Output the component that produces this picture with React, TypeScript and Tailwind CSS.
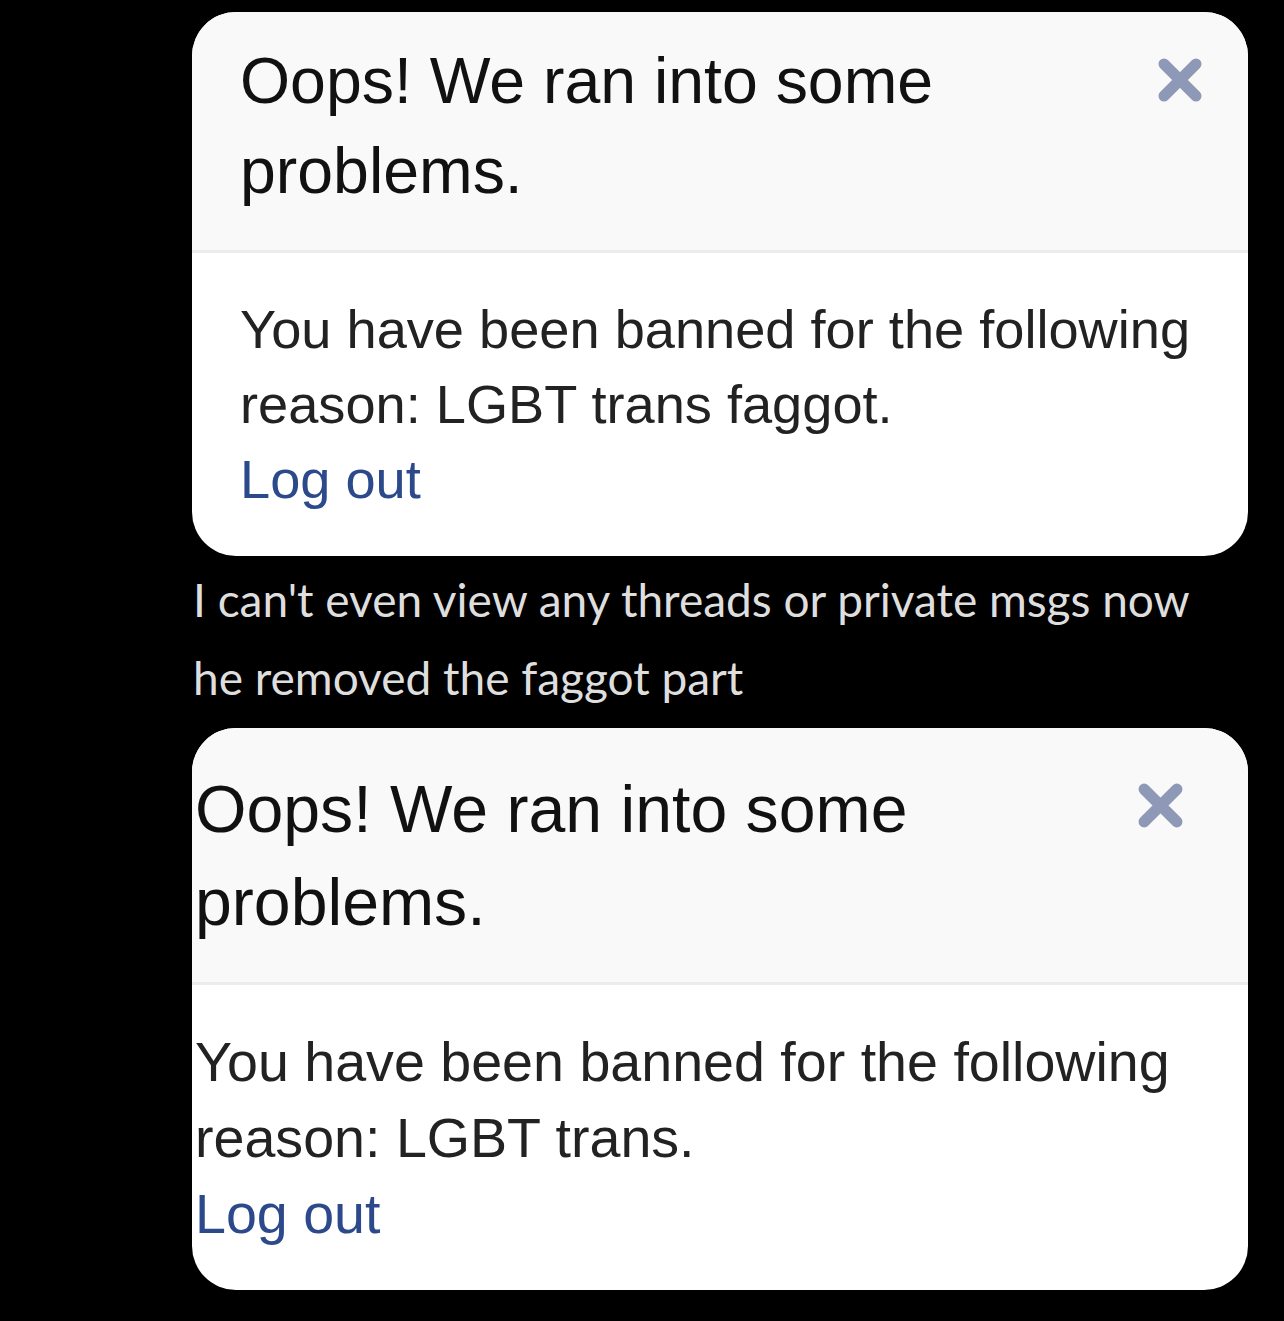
import React from "react";

function CloseIcon({ className }: { className?: string }) {
  return (
    <svg viewBox="0 0 46 46" className={className} fill="none">
      <path
        d="M7 7 L39 39 M39 7 L7 39"
        stroke="#8d99b6"
        strokeWidth="11"
        strokeLinecap="round"
      />
    </svg>
  );
}

export default function App() {
  return (
    <div className="min-h-[1321px] w-[1284px] bg-black pt-[12px] pl-[192px] font-['Liberation_Sans',Arial,sans-serif]">
      {/* first screenshot */}
      <div className="w-[1056px] overflow-hidden rounded-[44px] bg-white">
        <div className="relative border-b-[3px] border-[#ececec] bg-[#f9f9f9] pt-[24px] pr-[150px] pb-[34px] pl-[48px]">
          <h2 className="text-[64.4px] leading-[90px] text-[#111]">
            Oops! We ran into some problems.
          </h2>
          <CloseIcon className="absolute top-[45px] right-[45px] h-[46px] w-[46px]" />
        </div>
        <div className="pt-[39px] pr-[40px] pb-[39px] pl-[48px] text-[54.2px] leading-[75px] text-[#222]">
          <p>You have been banned for the following reason: LGBT trans faggot.</p>
          <a className="text-[#2c4a8b]">Log out</a>
        </div>
      </div>

      {/* message */}
      <div className="mt-[5px] mb-[11px] pl-[1px] font-['Lato',sans-serif] text-[46px] leading-[78px] text-[#dedede]">
        <p>I can't even view any threads or private msgs now</p>
        <p>he removed the faggot part</p>
      </div>

      {/* second screenshot */}
      <div className="w-[1056px] overflow-hidden rounded-[44px] bg-white">
        <div className="relative border-b-[3px] border-[#ececec] bg-[#f9f9f9] pt-[35px] pr-[150px] pb-[33px] pl-[3px]">
          <h2 className="text-[66.2px] leading-[93px] text-[#111]">
            Oops! We ran into some problems.
          </h2>
          <CloseIcon className="absolute top-[54px] right-[64px] h-[47px] w-[47px]" />
        </div>
        <div className="pt-[39px] pr-[40px] pb-[38px] pl-[3px] text-[55.6px] leading-[76px] text-[#222]">
          <p>You have been banned for the following reason: LGBT trans.</p>
          <a className="text-[#2c4a8b]">Log out</a>
        </div>
      </div>
    </div>
  );
}
